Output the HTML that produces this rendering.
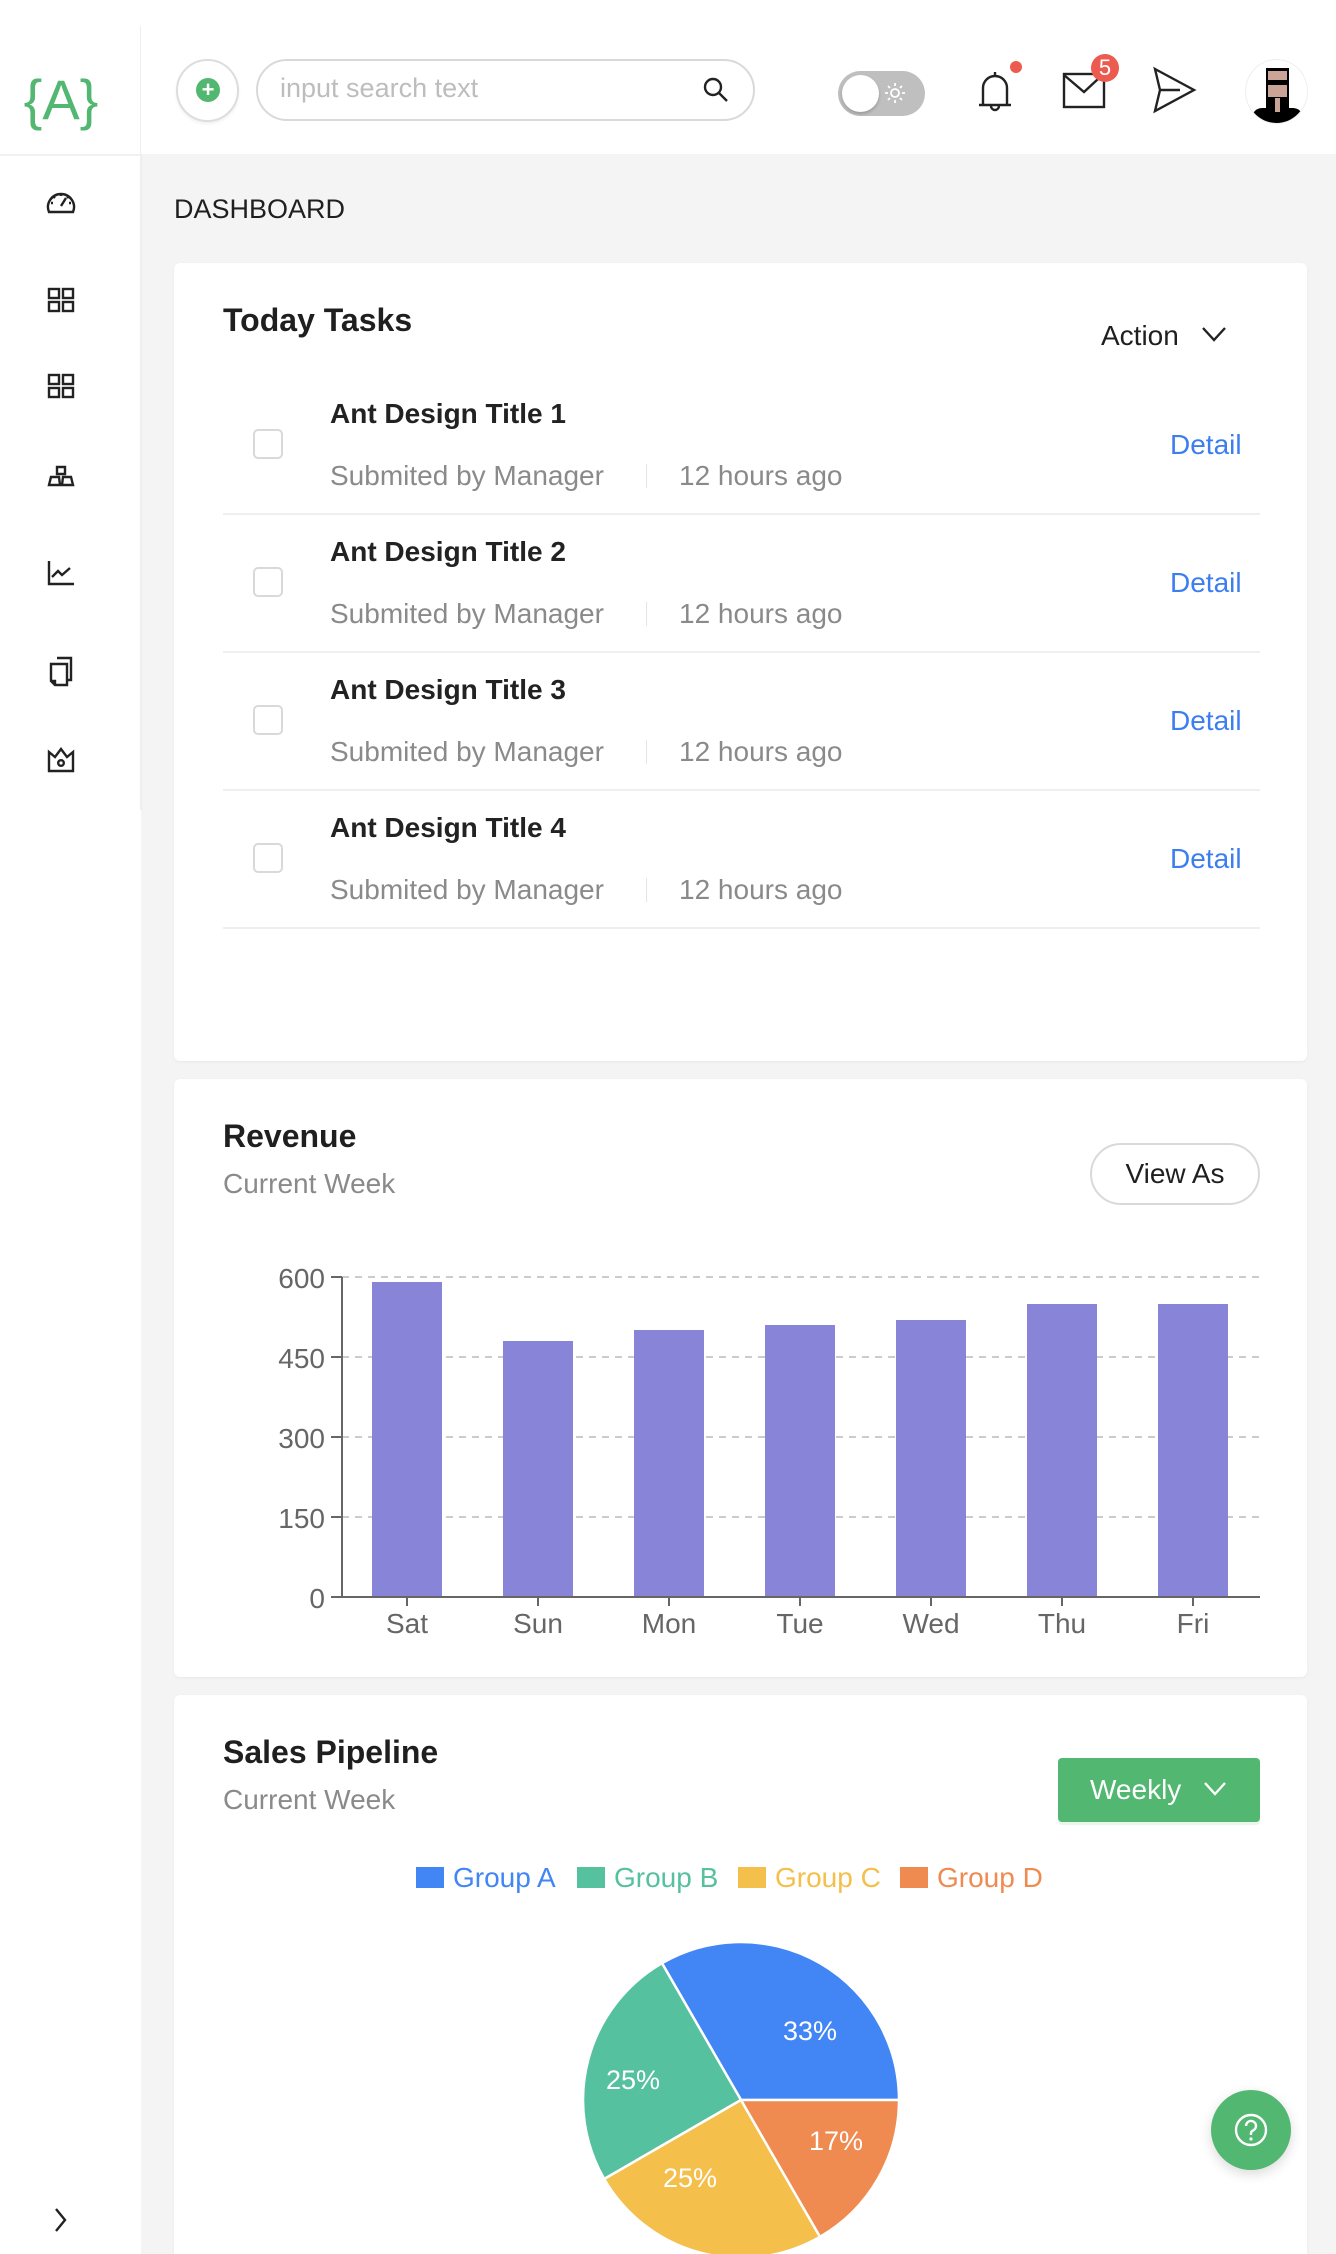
<!DOCTYPE html>
<html style="overflow:hidden;width:1336px;height:2254px"><head><meta charset="utf-8"><style>
*{box-sizing:border-box;margin:0;padding:0}
body{width:1336px;height:2254px;position:relative;overflow:hidden;background:#f4f4f4;font-family:"Liberation Sans",Arial,sans-serif;color:#1f1f1f}
.a{position:absolute}
.side{left:0;top:0;width:141px;height:2254px;background:#fff}
.card{background:#fff;border-radius:6px;box-shadow:0 1px 3px rgba(0,0,0,0.05)}
.t{font-size:28px;font-weight:bold;color:#222}
.s{font-size:28px;color:#8a8a8a}
.det{font-size:28px;color:#3c7ef0}
.cb{width:30px;height:30px;border:2px solid #d9d9d9;border-radius:5px;background:#fff}
.div{height:2px;background:#efefef;left:223px;width:1037px}
.ic{stroke:#222;fill:none;stroke-width:2.4}
</style></head><body>
<!-- header -->
<div class="a" style="left:0;top:0;width:1336px;height:154px;background:#fff"></div>
<div class="a side"></div>
<div class="a" style="left:140px;top:26px;width:1px;height:128px;background:#eee"></div>
<div class="a" style="left:140px;top:154px;width:2px;height:656px;background:#eee"></div>
<div class="a" style="left:0;top:154px;width:141px;height:2px;background:#f1f1f1"></div>
<div class="a" style="left:0;top:68px;width:122px;text-align:center;font-size:56px;color:#52b770;line-height:64px">{A}</div>
<!-- plus -->
<div class="a" style="left:176px;top:59px;width:63px;height:63px;border-radius:50%;border:2px solid #ddd;background:#fff;box-shadow:0 2px 3px rgba(0,0,0,.06)"></div>
<div class="a" style="left:196px;top:78px;width:24px;height:24px;border-radius:50%;background:#52b770;color:#fff;font-size:22px;line-height:23px;text-align:center;font-weight:bold">+</div>
<!-- search -->
<div class="a" style="left:256px;top:59px;width:499px;height:62px;border-radius:31px;border:2px solid #d9d9d9;background:#fff"></div>
<div class="a" style="left:280px;top:73px;font-size:27px;color:#bdbdbd">input search text</div>
<svg class="a" style="left:702px;top:76px" width="28" height="28" viewBox="0 0 28 28"><circle cx="11" cy="11" r="8" class="ic" stroke-width="2.6"/><path d="M17 17 L25 25" class="ic" stroke-width="2.8"/></svg>
<!-- toggle -->
<div class="a" style="left:838px;top:71px;width:87px;height:45px;border-radius:23px;background:#bfbfbf"></div>
<div class="a" style="left:842px;top:75px;width:37px;height:37px;border-radius:50%;background:#fff;box-shadow:0 2px 3px rgba(0,0,0,.2)"></div>
<svg class="a" style="left:884px;top:82px" width="22" height="22" viewBox="0 0 22 22" stroke="#fff" stroke-width="1.8" fill="none"><circle cx="11" cy="11" r="4"/><path d="M11 1v3M11 18v3M1 11h3M18 11h3M4 4l2 2M16 16l2 2M4 18l2-2M16 6l2-2"/></svg>
<!-- bell -->
<svg class="a" style="left:976px;top:66px" width="38" height="48" viewBox="0 0 38 48"><path d="M7 38 V22 a12 12 0 0 1 24 0 V38 M3 39 H35 M19 6 V10 M15 40 a4 4 0 0 0 8 0" class="ic" stroke-width="2.6"/></svg>
<div class="a" style="left:1010px;top:61px;width:12px;height:12px;border-radius:50%;background:#ec5b50"></div>
<!-- mail -->
<svg class="a" style="left:1062px;top:70px" width="46" height="40" viewBox="0 0 46 40"><rect x="2" y="4" width="40" height="33" class="ic" stroke-width="2.8"/><path d="M2 5 L22 22 L36 9" class="ic" stroke-width="2.6"/></svg>
<div class="a" style="left:1091px;top:54px;width:28px;height:28px;border-radius:50%;background:#ec5b50;color:#fff;font-size:22px;line-height:28px;text-align:center">5</div>
<!-- send -->
<svg class="a" style="left:1152px;top:66px" width="46" height="48" viewBox="0 0 46 48"><path d="M3 3 L42 24 L3 45 L8 24 Z M8 24 L28 24" class="ic" stroke-width="2.6" stroke-linejoin="miter"/></svg>
<!-- avatar -->
<div class="a" style="left:1245px;top:59px;width:63px;height:65px;border-radius:50%;border:1px solid #eee;background:#fff;overflow:hidden">
<div class="a" style="left:6px;top:48px;width:51px;height:20px;background:#000;border-radius:10px 10px 0 0"></div>
<div class="a" style="left:20px;top:8px;width:23px;height:44px;background:#000"></div>
<div class="a" style="left:22px;top:11px;width:19px;height:26px;background:#c9a497"></div>
<div class="a" style="left:21px;top:20px;width:21px;height:5px;background:#000"></div>
<div class="a" style="left:29px;top:38px;width:5px;height:14px;background:#c9a497"></div>
</div>
<!-- sidebar icons -->
<svg class="a" style="left:46px;top:188px" width="30" height="28" viewBox="0 0 30 28"><path d="M3 24 A13 13 0 1 1 27 24 Z" class="ic"/><path d="M15 18 L20 10" class="ic"/><path d="M15 6v2M8 9l1 1M22 9l-1 1M5 15h2M23 15h2" class="ic" stroke-width="1.8"/></svg>
<svg class="a" style="left:47px;top:287px" width="28" height="26" viewBox="0 0 28 26"><rect x="2" y="2" width="10" height="9" class="ic"/><rect x="16" y="2" width="10" height="9" class="ic"/><rect x="2" y="15" width="10" height="9" class="ic"/><rect x="16" y="15" width="10" height="9" class="ic"/></svg>
<svg class="a" style="left:47px;top:373px" width="28" height="26" viewBox="0 0 28 26"><rect x="2" y="2" width="10" height="9" class="ic"/><rect x="16" y="2" width="10" height="9" class="ic"/><rect x="2" y="15" width="10" height="9" class="ic"/><rect x="16" y="15" width="10" height="9" class="ic"/></svg>
<svg class="a" style="left:47px;top:465px" width="28" height="22" viewBox="0 0 28 22"><path d="M10 2h8v7h-8zM2 20l2-8h8l1 8zM15 20l1-8h8l2 8z" class="ic"/></svg>
<svg class="a" style="left:47px;top:560px" width="28" height="26" viewBox="0 0 28 26"><path d="M2 1V24H27M5 17l6-6 4 4 8-7" class="ic"/></svg>
<svg class="a" style="left:48px;top:656px" width="26" height="32" viewBox="0 0 26 32"><path d="M9 2H23V24H19M3 8H19V29H7L3 25Z M3 25h4v4" class="ic"/></svg>
<svg class="a" style="left:46px;top:747px" width="30" height="26" viewBox="0 0 30 26"><path d="M3 5L9 10L15 2L21 10L27 5V24H3Z" class="ic"/><circle cx="15" cy="16" r="2.8" class="ic"/></svg>
<svg class="a" style="left:52px;top:2206px" width="18" height="28" viewBox="0 0 18 28"><path d="M4 3 L13 14 L4 25" class="ic"/></svg>
<!-- dashboard -->
<div class="a" style="left:174px;top:194px;font-size:27px;color:#1f1f1f">DASHBOARD</div>
<!-- card 1 -->
<div class="a card" style="left:174px;top:263px;width:1133px;height:798px"></div>
<div class="a" style="left:223px;top:302px;font-size:32px;font-weight:bold">Today Tasks</div>
<div class="a" style="left:1101px;top:320px;font-size:28px">Action</div>
<svg class="a" style="left:1200px;top:324px" width="28" height="20" viewBox="0 0 28 20"><path d="M3 4L14 16L25 4" class="ic"/></svg>

<div class="a cb" style="left:253px;top:429px"></div>
<div class="a t" style="left:330px;top:398px">Ant Design Title 1</div>
<div class="a s" style="left:330px;top:460px">Submited by Manager</div>
<div class="a" style="left:646px;top:464px;width:1px;height:24px;background:#e5e5e5"></div>
<div class="a s" style="left:679px;top:460px">12 hours ago</div>
<div class="a det" style="left:1170px;top:429px">Detail</div>
<div class="a div" style="top:513px"></div>

<div class="a cb" style="left:253px;top:567px"></div>
<div class="a t" style="left:330px;top:536px">Ant Design Title 2</div>
<div class="a s" style="left:330px;top:598px">Submited by Manager</div>
<div class="a" style="left:646px;top:602px;width:1px;height:24px;background:#e5e5e5"></div>
<div class="a s" style="left:679px;top:598px">12 hours ago</div>
<div class="a det" style="left:1170px;top:567px">Detail</div>
<div class="a div" style="top:651px"></div>

<div class="a cb" style="left:253px;top:705px"></div>
<div class="a t" style="left:330px;top:674px">Ant Design Title 3</div>
<div class="a s" style="left:330px;top:736px">Submited by Manager</div>
<div class="a" style="left:646px;top:740px;width:1px;height:24px;background:#e5e5e5"></div>
<div class="a s" style="left:679px;top:736px">12 hours ago</div>
<div class="a det" style="left:1170px;top:705px">Detail</div>
<div class="a div" style="top:789px"></div>

<div class="a cb" style="left:253px;top:843px"></div>
<div class="a t" style="left:330px;top:812px">Ant Design Title 4</div>
<div class="a s" style="left:330px;top:874px">Submited by Manager</div>
<div class="a" style="left:646px;top:878px;width:1px;height:24px;background:#e5e5e5"></div>
<div class="a s" style="left:679px;top:874px">12 hours ago</div>
<div class="a det" style="left:1170px;top:843px">Detail</div>
<div class="a div" style="top:927px"></div>

<!-- card 2 -->
<div class="a card" style="left:174px;top:1079px;width:1133px;height:598px"></div>
<div class="a" style="left:223px;top:1118px;font-size:32px;font-weight:bold">Revenue</div>
<div class="a s" style="left:223px;top:1168px">Current Week</div>
<div class="a" style="left:1090px;top:1143px;width:170px;height:62px;border:2px solid #d9d9d9;border-radius:31px;font-size:28px;text-align:center;line-height:58px">View As</div>
<svg class="a" style="left:0;top:0" width="1336" height="1700" font-family="Liberation Sans, Arial, sans-serif">
<g stroke="#ccc" stroke-width="2" stroke-dasharray="7 6"><path d="M342 1277H1260M342 1357H1260M342 1437H1260M342 1517H1260"/></g>
<g fill="#8884d8">
<rect x="372" y="1282" width="70" height="315"/>
<rect x="503" y="1341" width="70" height="256"/>
<rect x="634" y="1330" width="70" height="267"/>
<rect x="765" y="1325" width="70" height="272"/>
<rect x="896" y="1320" width="70" height="277"/>
<rect x="1027" y="1304" width="70" height="293"/>
<rect x="1158" y="1304" width="70" height="293"/>
</g>
<g stroke="#666" stroke-width="2" fill="none"><path d="M342 1277V1597H1260M331 1277H342M331 1357H342M331 1437H342M331 1517H342M331 1597H342M407 1597v9M538 1597v9M669 1597v9M800 1597v9M931 1597v9M1062 1597v9M1193 1597v9"/></g>
<g fill="#666" font-size="28" text-anchor="end"><text x="325" y="1288">600</text><text x="325" y="1368">450</text><text x="325" y="1448">300</text><text x="325" y="1528">150</text><text x="325" y="1608">0</text></g>
<g fill="#666" font-size="28" text-anchor="middle"><text x="407" y="1633">Sat</text><text x="538" y="1633">Sun</text><text x="669" y="1633">Mon</text><text x="800" y="1633">Tue</text><text x="931" y="1633">Wed</text><text x="1062" y="1633">Thu</text><text x="1193" y="1633">Fri</text></g>
</svg>
<!-- card 3 -->
<div class="a card" style="left:174px;top:1695px;width:1133px;height:559px;border-radius:6px 6px 0 0"></div>
<div class="a" style="left:223px;top:1734px;font-size:32px;font-weight:bold">Sales Pipeline</div>
<div class="a s" style="left:223px;top:1784px">Current Week</div>
<div class="a" style="left:1058px;top:1758px;width:202px;height:64px;background:#52b770;border-radius:4px;box-shadow:0 3px 0 #e8f6ec;color:#fff;font-size:28px;line-height:64px;padding-left:32px">Weekly</div>
<svg class="a" style="left:1202px;top:1779px" width="26" height="20" viewBox="0 0 26 20"><path d="M3 4L13 15L23 4" stroke="#fff" stroke-width="2.4" fill="none"/></svg>
<svg class="a" style="left:0;top:1700px" width="1336" height="554" font-family="Liberation Sans, Arial, sans-serif">
<g font-size="28">
<rect x="416" y="167" width="28" height="21" fill="#4285f4"/><text x="453" y="187" fill="#4285f4">Group A</text>
<rect x="577" y="167" width="28" height="21" fill="#55c19f"/><text x="614" y="187" fill="#55c19f">Group B</text>
<rect x="738" y="167" width="28" height="21" fill="#f4bf4a"/><text x="775" y="187" fill="#f4bf4a">Group C</text>
<rect x="900" y="167" width="28" height="21" fill="#ef8a50"/><text x="937" y="187" fill="#ef8a50">Group D</text>
</g>
<g stroke="#fff" stroke-width="2.5">
<path d="M741 400 L899 400 A158 158 0 0 0 662 263.2 Z" fill="#4285f4"/>
<path d="M741 400 L662 263.2 A158 158 0 0 0 604.2 479 Z" fill="#55c19f"/>
<path d="M741 400 L604.2 479 A158 158 0 0 0 820 536.8 Z" fill="#f4bf4a"/>
<path d="M741 400 L820 536.8 A158 158 0 0 0 899 400 Z" fill="#ef8a50"/>
</g>
<g fill="#fff" font-size="27" text-anchor="middle"><text x="810" y="340">33%</text><text x="633" y="389">25%</text><text x="690" y="487">25%</text><text x="836" y="450">17%</text></g>
</svg>
<!-- help -->
<div class="a" style="left:1211px;top:2090px;width:80px;height:80px;border-radius:50%;background:#52b770;box-shadow:0 4px 12px rgba(0,0,0,.15)"></div>
<svg class="a" style="left:1233px;top:2112px" width="36" height="36" viewBox="0 0 36 36"><circle cx="18" cy="18" r="15" stroke="#fff" stroke-width="2.4" fill="none"/><path d="M13 14a5 5 0 1 1 7 4.5c-1.5.7-2 1.5-2 3v1.5" stroke="#fff" stroke-width="2.4" fill="none"/><circle cx="18" cy="27" r="1.6" fill="#fff"/></svg>
</body></html>
